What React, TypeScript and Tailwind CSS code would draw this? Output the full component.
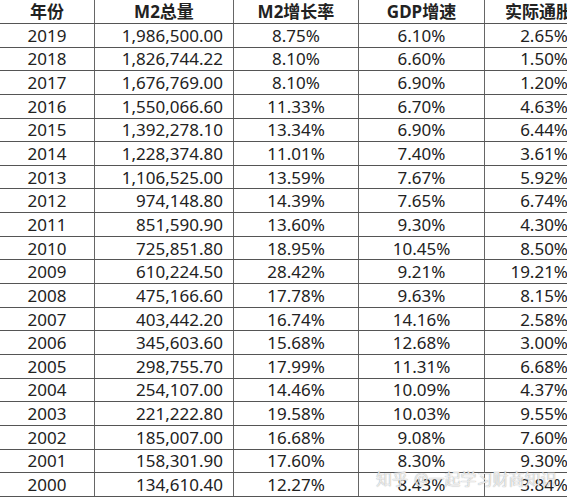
const rows: [string, string, string, string, string][] = [
  ["2019", "1,986,500.00", "8.75%", "6.10%", "2.65%"],
  ["2018", "1,826,744.22", "8.10%", "6.60%", "1.50%"],
  ["2017", "1,676,769.00", "8.10%", "6.90%", "1.20%"],
  ["2016", "1,550,066.60", "11.33%", "6.70%", "4.63%"],
  ["2015", "1,392,278.10", "13.34%", "6.90%", "6.44%"],
  ["2014", "1,228,374.80", "11.01%", "7.40%", "3.61%"],
  ["2013", "1,106,525.00", "13.59%", "7.67%", "5.92%"],
  ["2012", "974,148.80", "14.39%", "7.65%", "6.74%"],
  ["2011", "851,590.90", "13.60%", "9.30%", "4.30%"],
  ["2010", "725,851.80", "18.95%", "10.45%", "8.50%"],
  ["2009", "610,224.50", "28.42%", "9.21%", "19.21%"],
  ["2008", "475,166.60", "17.78%", "9.63%", "8.15%"],
  ["2007", "403,442.20", "16.74%", "14.16%", "2.58%"],
  ["2006", "345,603.60", "15.68%", "12.68%", "3.00%"],
  ["2005", "298,755.70", "17.99%", "11.31%", "6.68%"],
  ["2004", "254,107.00", "14.46%", "10.09%", "4.37%"],
  ["2003", "221,222.80", "19.58%", "10.03%", "9.55%"],
  ["2002", "185,007.00", "16.68%", "9.08%", "7.60%"],
  ["2001", "158,301.90", "17.60%", "8.30%", "9.30%"],
  ["2000", "134,610.40", "12.27%", "8.43%", "3.84%"],
];

const cols = "grid grid-cols-[95px_139px_125px_126px_90px]";

export default function App() {
  return (
    <div className="relative w-[567px] h-[500px] overflow-hidden bg-white text-[#222] font-['Noto_Sans','Noto_Sans_CJK_SC',sans-serif]">
      <div className="w-[575px]">
        {/* header */}
        <div className={`${cols} h-[24px] border-b border-[#555] text-[17px] font-bold leading-none`}>
          <div className="flex items-center justify-center border-r border-[#666]">年份</div>
          <div className="flex items-center justify-center border-r border-[#666]">M2总量</div>
          <div className="flex items-center justify-center border-r border-[#666]">M2增长率</div>
          <div className="flex items-center justify-center border-r border-[#666]">GDP增速</div>
          <div className="flex items-center pl-[20px] whitespace-nowrap">实际通胀率</div>
        </div>

        {rows.map((r) => (
          <div
            key={r[0]}
            className={`${cols} h-[23.65px] border-b border-[#555] text-[17px] leading-none`}
          >
            <div className="flex items-center justify-center border-r border-[#666]">{r[0]}</div>
            <div className="flex items-center justify-end pr-[10px] border-r border-[#666]">{r[1]}</div>
            <div className="flex items-center justify-center border-r border-[#666]">{r[2]}</div>
            <div className="flex items-center justify-center border-r border-[#666]">{r[3]}</div>
            <div className="flex items-center justify-end pr-[7px]">{r[4]}</div>
          </div>
        ))}
      </div>

      {/* watermark */}
      <div className="absolute left-[376px] top-[467px] flex items-center gap-[6px] text-[16px] text-white/80 [text-shadow:0_0_1px_#888]">
        <span>知乎</span>
        <span>@一起学习财商知识</span>
      </div>
    </div>
  );
}
